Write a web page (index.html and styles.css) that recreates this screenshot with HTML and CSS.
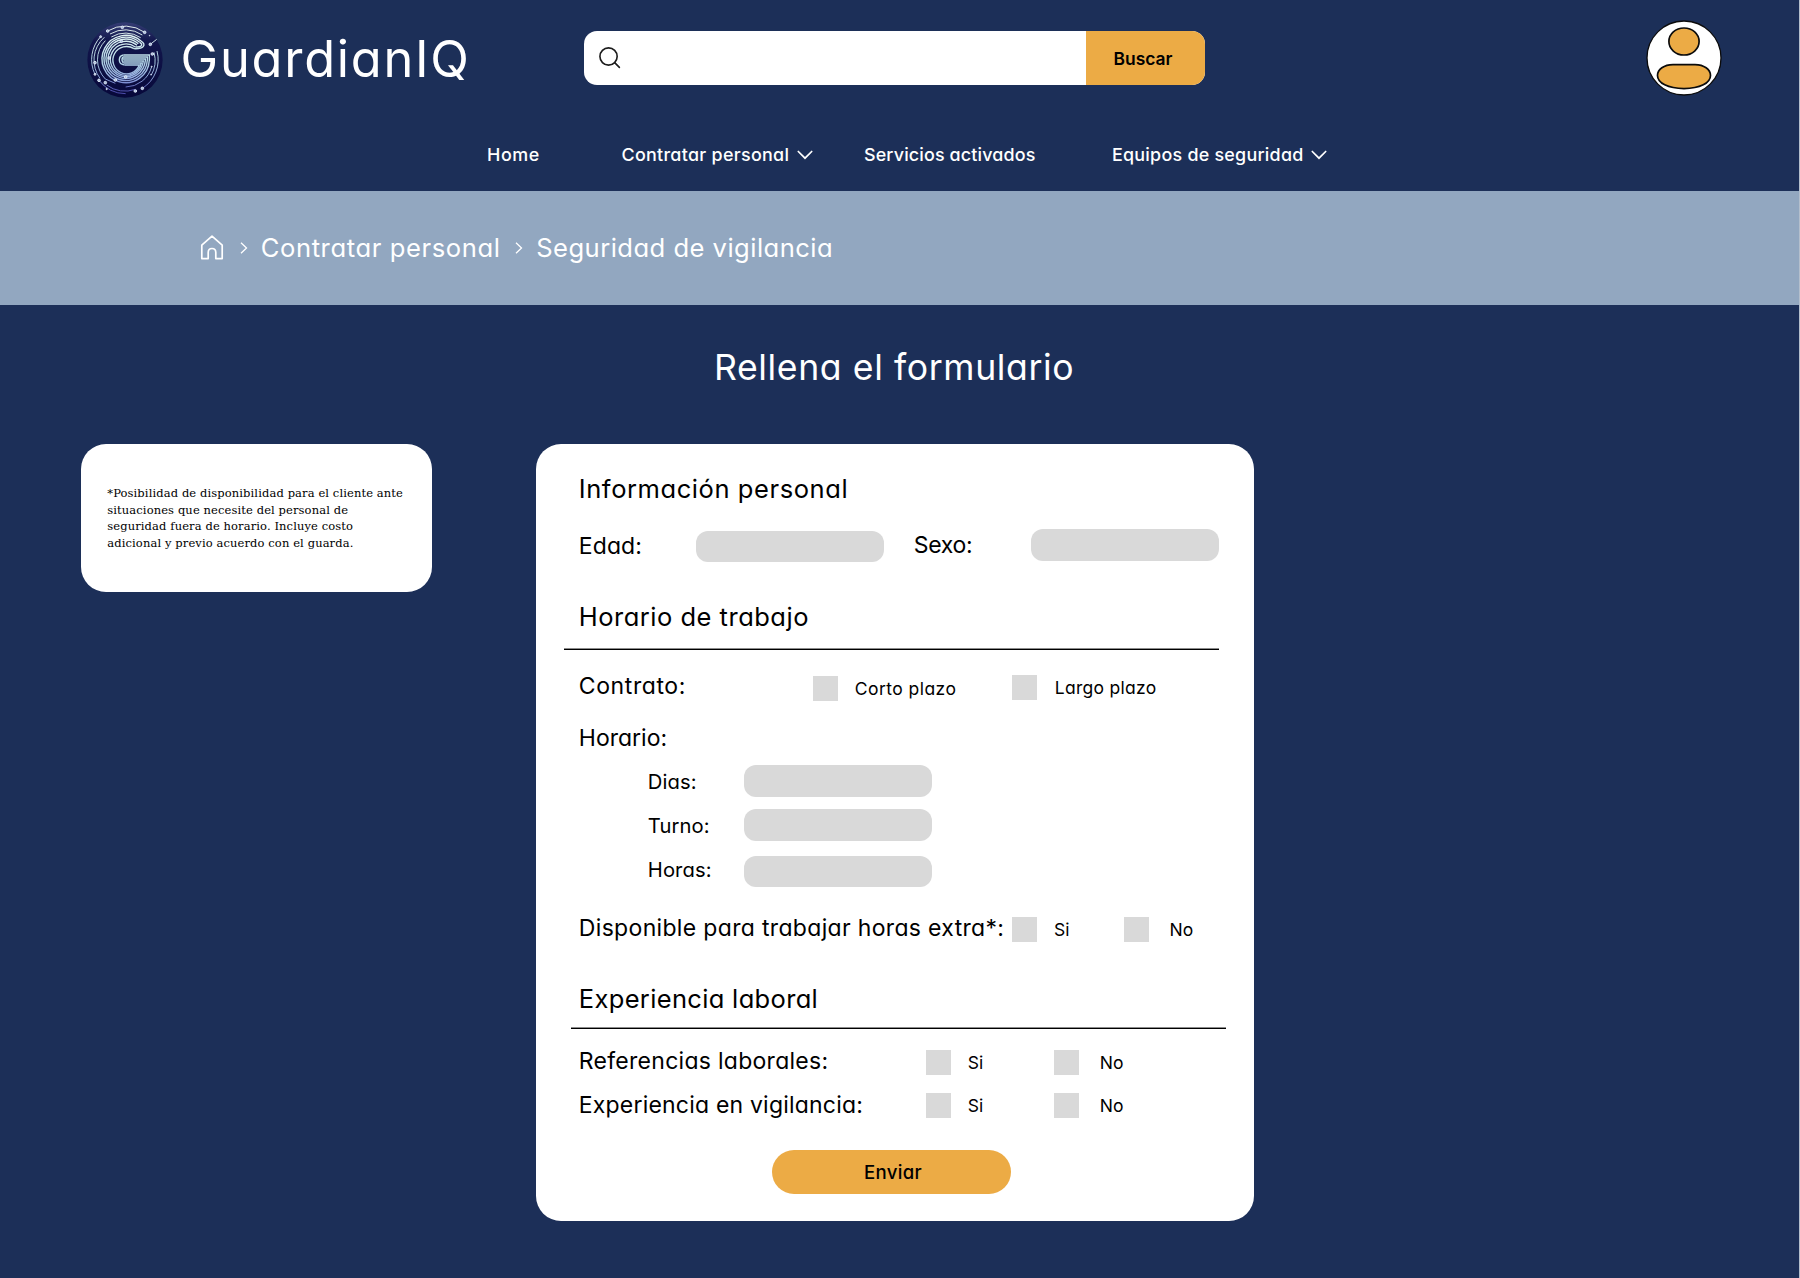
FILE: index.html
```html
<!DOCTYPE html>
<html lang="es">
<head>
<meta charset="utf-8">
<title>GuardianIQ</title>
<link rel="stylesheet" href="styles.css">
</head>
<body>
<div class="page">
  <header class="header">
    <div class="topbar">
      <svg class="logo" viewBox="0 0 270 270">
        <defs>
          <linearGradient id="disc" x1="0" y1="0" x2="0" y2="1"><stop offset="0" stop-color="#343c74"/><stop offset=".25" stop-color="#12164c"/><stop offset="1" stop-color="#07083a"/></linearGradient>
          <linearGradient id="trace" gradientUnits="userSpaceOnUse" x1="0" y1="40" x2="0" y2="230"><stop offset="0" stop-color="#eefaf6"/><stop offset=".5" stop-color="#b4d8e6"/><stop offset=".8" stop-color="#8ea6de"/><stop offset="1" stop-color="#5252b4"/></linearGradient>
        </defs>
        <circle cx="135" cy="135" r="113" fill="url(#disc)"/>
        <g fill="none" stroke="url(#trace)" stroke-width="4.2">
          <path d="M183 78A71 71 0 1 0 208 135V120H130"/>
          <path d="M179 82A65 65 0 1 0 202 135V126H128"/>
          <path d="M175 86A59 59 0 1 0 196 137V132H128"/>
          <path d="M171 91A53 53 0 1 0 190 138H130"/>
          <path d="M166 96A47 47 0 1 0 184 144H130"/>
          <path d="M162 101A41 41 0 1 0 178 150H134"/>
          <path d="M183 78Q196 86 190 94T162 101M179 82Q188 88 184 92T166 96"/>
          <path d="M130 120Q118 122 118 135T134 150M128 126Q123 135 130 144"/>
        </g>
        <g fill="none" stroke="url(#trace)" stroke-width="2.8">
          <path d="M83 48A101 101 0 0 1 194 52M62 65A101 101 0 0 0 45 178M57 196A101 101 0 0 0 137 236M187 220A101 101 0 0 0 231 108"/>
          <path d="M90 57A91 91 0 0 1 187 60M73 67A91 91 0 0 0 60 190M80 210A91 91 0 0 0 166 223M213 182A91 91 0 0 0 222 112"/>
          <path d="M94 66A82 82 0 0 1 182 68M76 77A82 82 0 0 0 76 192L106 205M137 216A82 82 0 0 0 215 155M211 88L230 73"/>
        </g>
        <g fill="#a9bce0" stroke="#e6eef6" stroke-width="2.5">
          <circle cx="83" cy="48" r="4"/><circle cx="127" cy="37" r="4"/><circle cx="194" cy="52" r="4"/><circle cx="62" cy="65" r="3"/><circle cx="211" cy="88" r="4"/><circle cx="217" cy="117" r="4"/><circle cx="45" cy="143" r="4"/><circle cx="45" cy="178" r="3"/><circle cx="57" cy="196" r="4"/><circle cx="76" cy="203" r="4"/><circle cx="80" cy="222" r="2"/><circle cx="187" cy="220" r="4"/><circle cx="166" cy="228" r="4"/><circle cx="137" cy="186" r="4"/><circle cx="106" cy="195" r="4"/><circle cx="88" cy="129" r="4"/><circle cx="124" cy="79" r="4"/><circle cx="215" cy="155" r="1.5"/><circle cx="213" cy="178" r="1"/><circle cx="209" cy="62" r="1"/>
        </g>
      </svg>
      <span class="brand">GuardianIQ</span>
      <div class="search">
        <div class="search-field">
          <svg class="search-icon" viewBox="0 0 24 24"><circle cx="11" cy="11" r="9"/><path d="M17.4 17.4L22.3 22.3"/></svg>
        </div>
        <button class="search-button">Buscar</button>
      </div>
      <svg class="avatar" viewBox="0 0 76 76">
        <circle cx="38" cy="38" r="37" fill="#fff" stroke="#0b0b0b" stroke-width="1.3"/>
        <ellipse cx="38" cy="21.5" rx="15.1" ry="13.5" fill="#ecab45" stroke="#0b0b0b" stroke-width="1.7"/>
        <path d="M27 44.6H49C58 44.6 64.5 49.5 64.5 55.5C64.5 63 54 68.6 38 68.6S11.5 63 11.5 55.5C11.5 49.5 18 44.6 27 44.6Z" fill="#ecab45" stroke="#0b0b0b" stroke-width="1.7"/>
      </svg>
    </div>
    <nav class="nav">
      <a class="nav-home">Home</a>
      <a class="nav-staff">Contratar personal<svg class="caret" viewBox="0 0 16 10"><path d="M1.3 1.5L8 8.2L14.7 1.5"/></svg></a>
      <a class="nav-services">Servicios activados</a>
      <a class="nav-gear">Equipos de seguridad<svg class="caret" viewBox="0 0 16 10"><path d="M1.3 1.5L8 8.2L14.7 1.5"/></svg></a>
    </nav>
  </header>
  <div class="crumbs">
    <svg class="home" viewBox="0 0 24 25"><path d="M1.8 10.2L12 1.2L22.2 10.2V23.6H15.8V17.5C15.8 15 14.2 13.5 12 13.5S8.2 15 8.2 17.5V23.6H1.8Z"/></svg>
    <svg class="sep" viewBox="0 0 8 12"><path d="M1 .8L6.5 6L1 11.2"/></svg>
    <span class="crumb crumb-staff">Contratar personal</span>
    <svg class="sep" viewBox="0 0 8 12"><path d="M1 .8L6.5 6L1 11.2"/></svg>
    <span class="crumb crumb-here">Seguridad de vigilancia</span>
  </div>
  <h1 class="title">Rellena el formulario</h1>
  <main class="content">
    <aside class="note">*Posibilidad de disponibilidad para el cliente ante<br>situaciones que necesite del personal de<br>seguridad fuera de horario. Incluye costo<br>adicional y previo acuerdo con el guarda.</aside>
    <form class="card">
      <h2 class="section section-personal">Información personal</h2>
      <div class="row row-personal">
        <label class="label age">Edad:</label><span class="input age-input"></span>
        <label class="label sex">Sexo:</label><span class="input sex-input"></span>
      </div>
      <h2 class="section section-schedule">Horario de trabajo</h2>
      <hr class="rule">
      <div class="row row-contract">
        <span class="label">Contrato:</span>
        <span class="check short"></span><span class="option short-text">Corto plazo</span>
        <span class="check long"></span><span class="option long-text">Largo plazo</span>
      </div>
      <div class="row row-hours-label"><span class="label">Horario:</span></div>
      <div class="row row-sub row-days"><label class="sublabel">Dias:</label><span class="input"></span></div>
      <div class="row row-sub row-shift"><label class="sublabel">Turno:</label><span class="input"></span></div>
      <div class="row row-sub row-hours"><label class="sublabel raised">Horas:</label><span class="input"></span></div>
      <div class="row row-extra">
        <span class="label">Disponible para trabajar horas extra*:</span>
        <span class="check"></span><span class="option yes">Si</span>
        <span class="check"></span><span class="option no">No</span>
      </div>
      <h2 class="section section-experience">Experiencia laboral</h2>
      <hr class="rule rule-experience">
      <div class="row row-answer row-references">
        <span class="label">Referencias laborales:</span>
        <span class="check"></span><span class="option yes">Si</span>
        <span class="check"></span><span class="option no">No</span>
      </div>
      <div class="row row-answer row-security">
        <span class="label">Experiencia en vigilancia:</span>
        <span class="check"></span><span class="option yes">Si</span>
        <span class="check"></span><span class="option no">No</span>
      </div>
      <button class="submit" type="button">Enviar</button>
    </form>
  </main>
</div>
</body>
</html>
```
FILE: styles.css
```css
* { box-sizing: border-box; }
body { margin: 0; background: #1c2f58; }
.page {
  width: 1800px; height: 1278px; overflow: hidden;
  background: #1c2f58; border-right: 1px solid #b4bfcd;
  font-family: Inter, "Open Sans", sans-serif;
  font-feature-settings: "cv11"; color: #000;
}
h1, h2 { margin: 0; font-weight: 400; }
button { border: 0; padding: 0; font: inherit; color: inherit; font-feature-settings: inherit; }
a, .brand, .crumb, .label, .option { white-space: nowrap; }

/* Header */
.header { height: 190.5px; }
.topbar { display: flex; height: 116px; padding-left: 80px; }
.logo { width: 90px; height: 90px; margin-top: 15px; }
.brand { width: 414.3px; padding-left: 10.5px; font-size: 50.5px; line-height: 118px; letter-spacing: 1.75px; color: #fff; }
.search { display: flex; width: 620.7px; height: 54px; margin-top: 31.3px; border-radius: 13px; overflow: hidden; background: #fff; }
.search-field { width: 501.7px; padding: 15px 0 0 13.5px; }
.search-icon { display: block; width: 23px; height: 23px; fill: none; stroke: #1c1c1c; stroke-width: 1.7; stroke-linecap: round; }
.search-button { width: 119px; padding-right: 5px; background: #ecab45; font-size: 17.4px; font-weight: 600; font-feature-settings: normal; }
.avatar { width: 76px; height: 76px; margin: 19.5px 0 0 441.5px; }

.nav { display: flex; align-items: center; height: 77px; padding-left: 487px; color: #fff; font-size: 17.9px; font-weight: 500; }
.nav a { display: flex; align-items: center; }
.nav-home { width: 134.5px; letter-spacing: .6px; }
.nav-staff { width: 242.5px; letter-spacing: .3px; }
.nav-services { width: 248px; letter-spacing: .15px; }
.nav-gear { letter-spacing: .25px; }
.caret { width: 16px; height: 10px; margin-left: 7.5px; fill: none; stroke: #fff; stroke-width: 1.7; stroke-linecap: round; }

/* Breadcrumbs */
.crumbs { display: flex; align-items: center; height: 114px; padding-left: 199.5px; background: #92a7c0; color: #fff; }
.home { width: 24px; height: 25px; fill: none; stroke: #fff; stroke-width: 1.7; stroke-linejoin: round; }
.sep { width: 8px; height: 12px; margin-left: 16.7px; fill: none; stroke: #fff; stroke-width: 1.3; }
.crumb { font-size: 25.6px; }
.crumb-staff { width: 254px; margin-left: 12.5px; letter-spacing: .6px; }
.crumb-staff + .sep { margin-left: 0; }
.crumb-here { margin-left: 13.5px; letter-spacing: .46px; }

.title { height: 139.5px; padding: 43.5px 0 0 714px; font-size: 35.6px; line-height: 40px; letter-spacing: .62px; color: #fff; white-space: nowrap; }
.content { display: flex; align-items: flex-start; padding-left: 81px; }
.note { width: 351.3px; height: 148px; padding: 41.3px 0 0 26.3px; border-radius: 25px; background: #fff; font: 11.5px/16.4px "DejaVu Serif", serif; letter-spacing: .11px; white-space: nowrap; }

/* Form card */
.card { width: 718px; height: 776.7px; margin-left: 104px; padding: 27px 0 0 42.5px; border-radius: 25px; background: #fff; flex: none; }

.section { height: 36px; font-size: 25.5px; line-height: 36px; letter-spacing: .58px; white-space: nowrap; }
.section-schedule { margin-top: 37px; letter-spacing: .5px; }
.section-experience { margin-top: 38.5px; letter-spacing: .33px; }
.rule { width: 655px; height: 2px; margin: 13px 0 0 -14.8px; border: 0; background: linear-gradient(#8c8c8c 50%, #000 50%); }
.rule-experience { margin: 9.8px 0 0 -8.3px; }

.row { display: flex; align-items: center; }
.label { font-size: 23px; }
.option { font-size: 17.5px; }
.input { width: 188.5px; height: 31.5px; border-radius: 12px; background: #d9d9d9; flex: none; }
.check { width: 25px; height: 25px; background: #d9d9d9; flex: none; }

.row-personal { height: 32px; margin-top: 23px; }
.age { width: 117px; margin-top: 0; letter-spacing: .1px; }
.age-input { margin-top: 1px; }
.sex { width: 117px; margin-left: 29.5px; margin-top: -2.5px; letter-spacing: -.35px; }
.sex-input { margin-top: -2px; }
.row-contract { height: 26px; margin-top: 25px; }
.row-contract .label { width: 234px; margin-top: -4px; letter-spacing: .6px; }
.short { margin-top: 1.5px; }
.short-text { width: 157.5px; margin: 1.5px 0 0 17px; letter-spacing: .45px; }
.long { margin-top: -1px; }
.long-text { margin: -1px 0 0 17.5px; letter-spacing: .28px; }
.row-hours-label { height: 32px; margin-top: 21px; letter-spacing: 0; }
.row-sub { height: 32px; padding-left: 69px; }
.sublabel { width: 95.8px; font-size: 20.2px; letter-spacing: .1px; }
.raised { margin-top: -5px; }
.row-days { margin-top: 11px; }
.row-shift { margin-top: 12px; }
.row-hours { margin-top: 14.5px; }
.row-extra { height: 26px; margin-top: 29px; }
.row-extra .label { width: 433.2px; margin-top: -4px; letter-spacing: .33px; }
.row-extra .yes { width: 70px; margin-left: 17px; }
.row-extra .no { margin-left: 20.5px; }
.row-answer { height: 26px; }
.row-answer .label { width: 347px; margin-top: -3.5px; letter-spacing: .28px; }
.row-answer .yes { width: 86px; margin-left: 17px; }
.row-answer .no { margin-left: 21px; }
.row-references { margin-top: 21px; }
.row-security { margin-top: 17px; }
.row-security .label { letter-spacing: .2px; margin-top: -2.5px; }
.submit { display: block; width: 238.5px; height: 44px; margin: 31.5px 0 0 193.5px; padding-left: 3px; border-radius: 22px; background: #ecab45; font-size: 18.6px; font-weight: 500; letter-spacing: .3px; }
```
